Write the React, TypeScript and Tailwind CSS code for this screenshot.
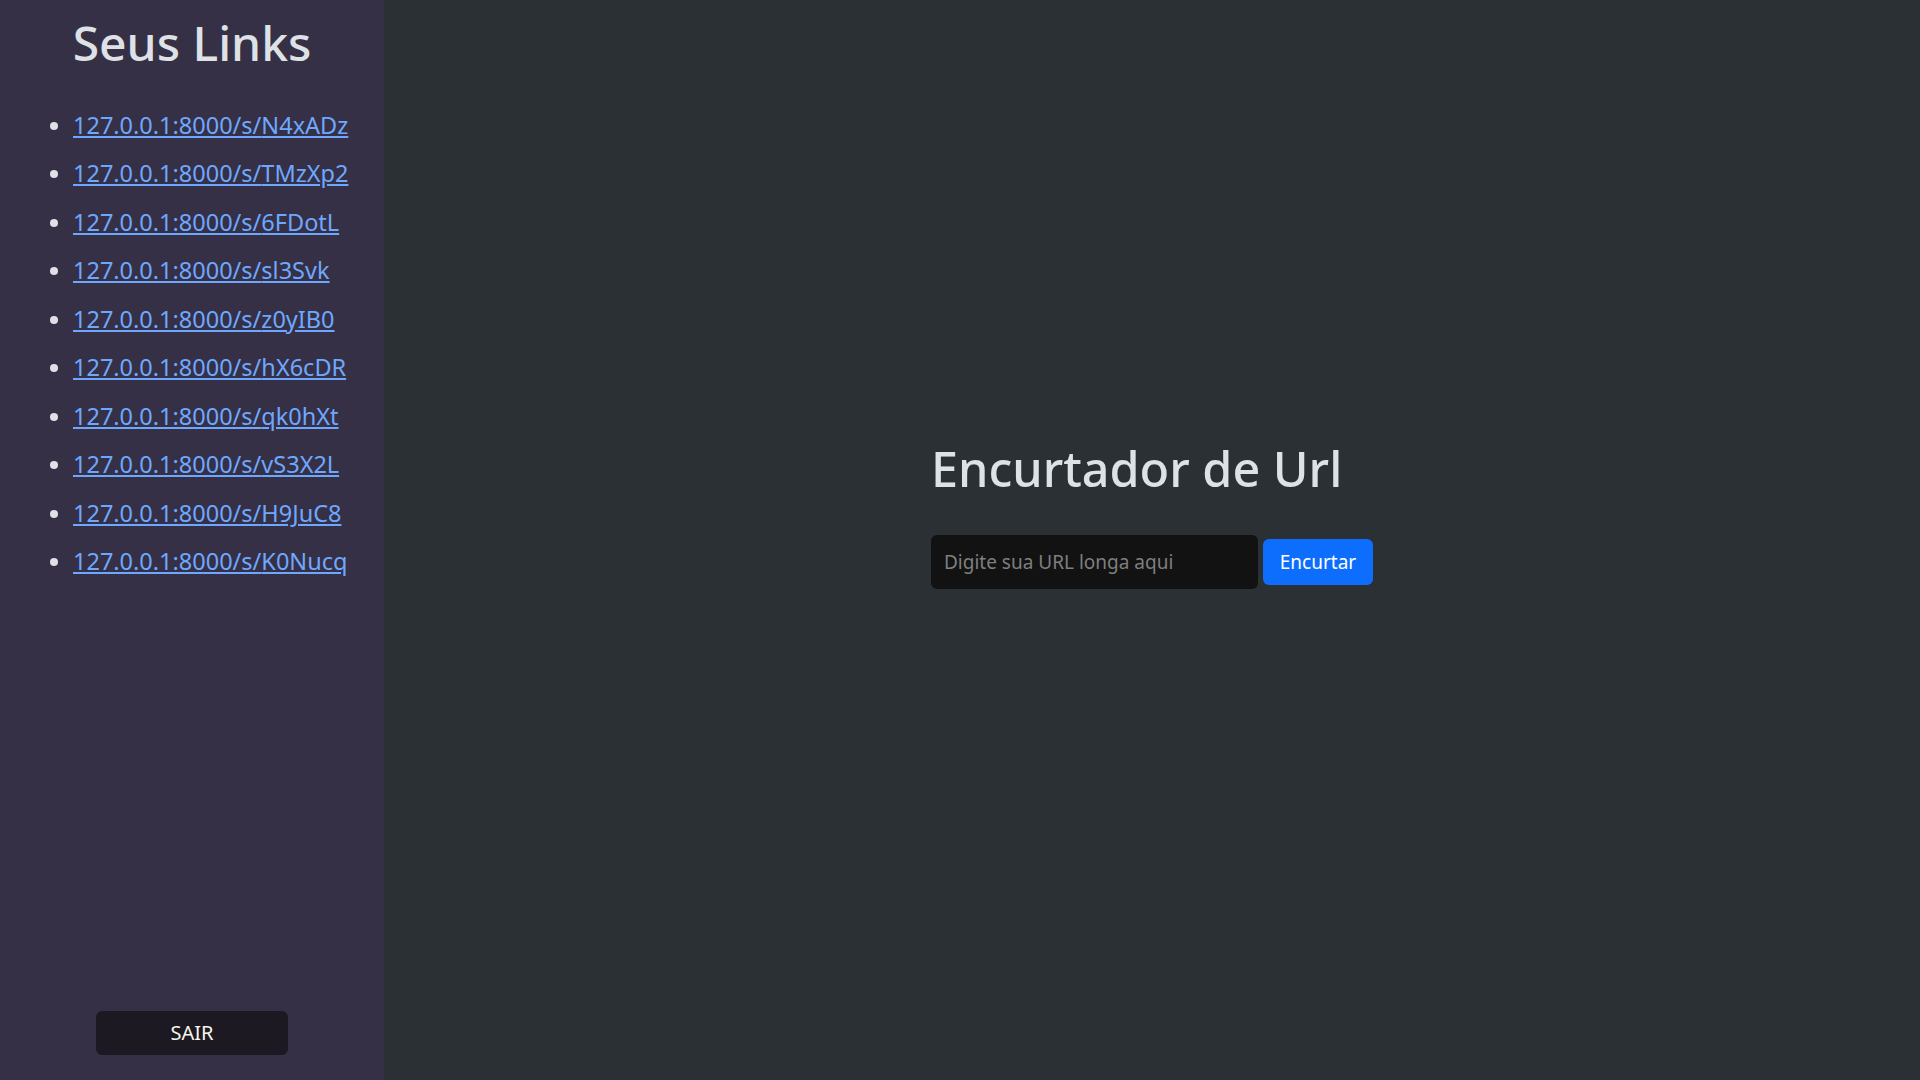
import { useState } from 'react';

const links = [
  'N4xADz',
  'TMzXp2',
  '6FDotL',
  'sl3Svk',
  'z0yIB0',
  'hX6cDR',
  'qk0hXt',
  'vS3X2L',
  'H9JuC8',
  'K0Nucq',
];

export default function App() {
  const [url, setUrl] = useState('');

  return (
    <div className="flex h-screen w-full font-['Noto_Sans',sans-serif] text-[#dee2e6]">
      <aside className="flex w-[384px] shrink-0 flex-col bg-[#363046]">
        <h1 className="mt-[14px] text-center text-[48px] leading-[1.2] font-medium">
          Seus Links
        </h1>
        <ul className="mt-[29px] list-disc pl-[73px] text-[23.5px] leading-[48.5px]">
          {links.map((code) => (
            <li key={code} className="marker:text-[#dee2e6]">
              <a
                href={`http://127.0.0.1:8000/s/${code}`}
                className="text-[#6ea8fe] underline"
              >
                127.0.0.1:8000/s/{code}
              </a>
            </li>
          ))}
        </ul>
        <div className="mt-auto mb-[25px] flex justify-center">
          <button
            type="button"
            className="h-[44px] w-[192px] rounded-md bg-[#1c1923] text-[20px] text-[#f8f5ea]"
          >
            SAIR
          </button>
        </div>
      </aside>

      <main className="flex flex-1 items-center justify-center bg-[#2b3035]">
        <div className="pb-[52px]">
          <h1 className="text-[48.5px] leading-[1.2] font-medium">
            Encurtador de Url
          </h1>
          <form
            className="mt-[38px] flex items-center gap-[5px]"
            onSubmit={(event) => event.preventDefault()}
          >
            <input
              value={url}
              onChange={(event) => setUrl(event.target.value)}
              placeholder="Digite sua URL longa aqui"
              className="h-[54px] w-[327px] rounded-md bg-[#121212] pl-[13px] text-[19px] text-[#dee2e6] outline-none placeholder:text-[#7f7f7f]"
            />
            <button
              type="submit"
              className="h-[46px] w-[110px] rounded-md bg-[#0d6efd] text-[19px] text-white"
            >
              Encurtar
            </button>
          </form>
        </div>
      </main>
    </div>
  );
}
